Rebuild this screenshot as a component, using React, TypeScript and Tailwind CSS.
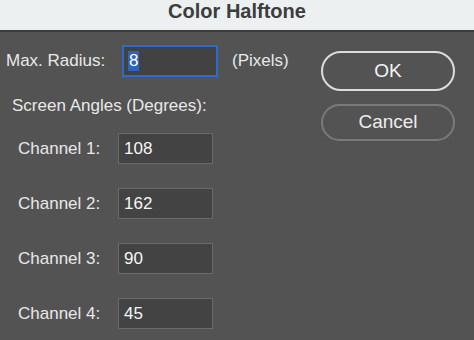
import React from 'react';

const channels = [
  { label: 'Channel 1:', value: '108' },
  { label: 'Channel 2:', value: '162' },
  { label: 'Channel 3:', value: '90' },
  { label: 'Channel 4:', value: '45' },
];

export default function App() {
  return (
    <div className="w-[474px] h-[340px] overflow-hidden bg-[#535353] text-[17px] text-[#e8e8e8] font-['Liberation_Sans',Arial,sans-serif]">
      {/* Title bar */}
      <div className="h-[32px] bg-[#ecf0f0] border-b-2 border-[#3c3c3c] flex justify-center">
        <span className="text-[20px] font-bold leading-[23px] text-[#3d3d3d]">Color Halftone</span>
      </div>

      <div className="flex">
        {/* Left column */}
        <div className="flex flex-col pl-[6px] pt-[13px] w-[315px]">
          <div className="flex items-center h-[32px]">
            <span className="w-[116px]">Max. Radius:</span>
            <div className="w-[96px] h-[32px] border-2 border-[#2d6bd0] bg-[#424242] flex items-center pl-[4px]">
              <span className="bg-[#2f63b4] text-white leading-[20px] px-[1px]">8</span>
            </div>
            <span className="ml-[14px]">(Pixels)</span>
          </div>

          <div className="mt-[19px] pl-[6px] leading-[20px]">Screen Angles (Degrees):</div>

          <div className="flex flex-col gap-[24px] mt-[17px] pl-[12px]">
            {channels.map((c) => (
              <div key={c.label} className="flex items-center h-[31px]">
                <span className="w-[100px]">{c.label}</span>
                <div className="w-[95px] h-[31px] border border-[#6a6a6a] bg-[#434343] flex items-center pl-[5px] text-[#f6f6f6]">
                  {c.value}
                </div>
              </div>
            ))}
          </div>
        </div>

        {/* Buttons */}
        <div className="flex flex-col pt-[19px] pl-[6px] gap-[13px]">
          <button className="w-[134px] h-[40px] rounded-full border-2 border-[#dcdcdc] text-[19px] text-[#f4f4f4]">
            OK
          </button>
          <button className="w-[134px] h-[37px] rounded-full border-2 border-[#7a7a7a] text-[19px] text-[#ececec]">
            Cancel
          </button>
        </div>
      </div>
    </div>
  );
}
